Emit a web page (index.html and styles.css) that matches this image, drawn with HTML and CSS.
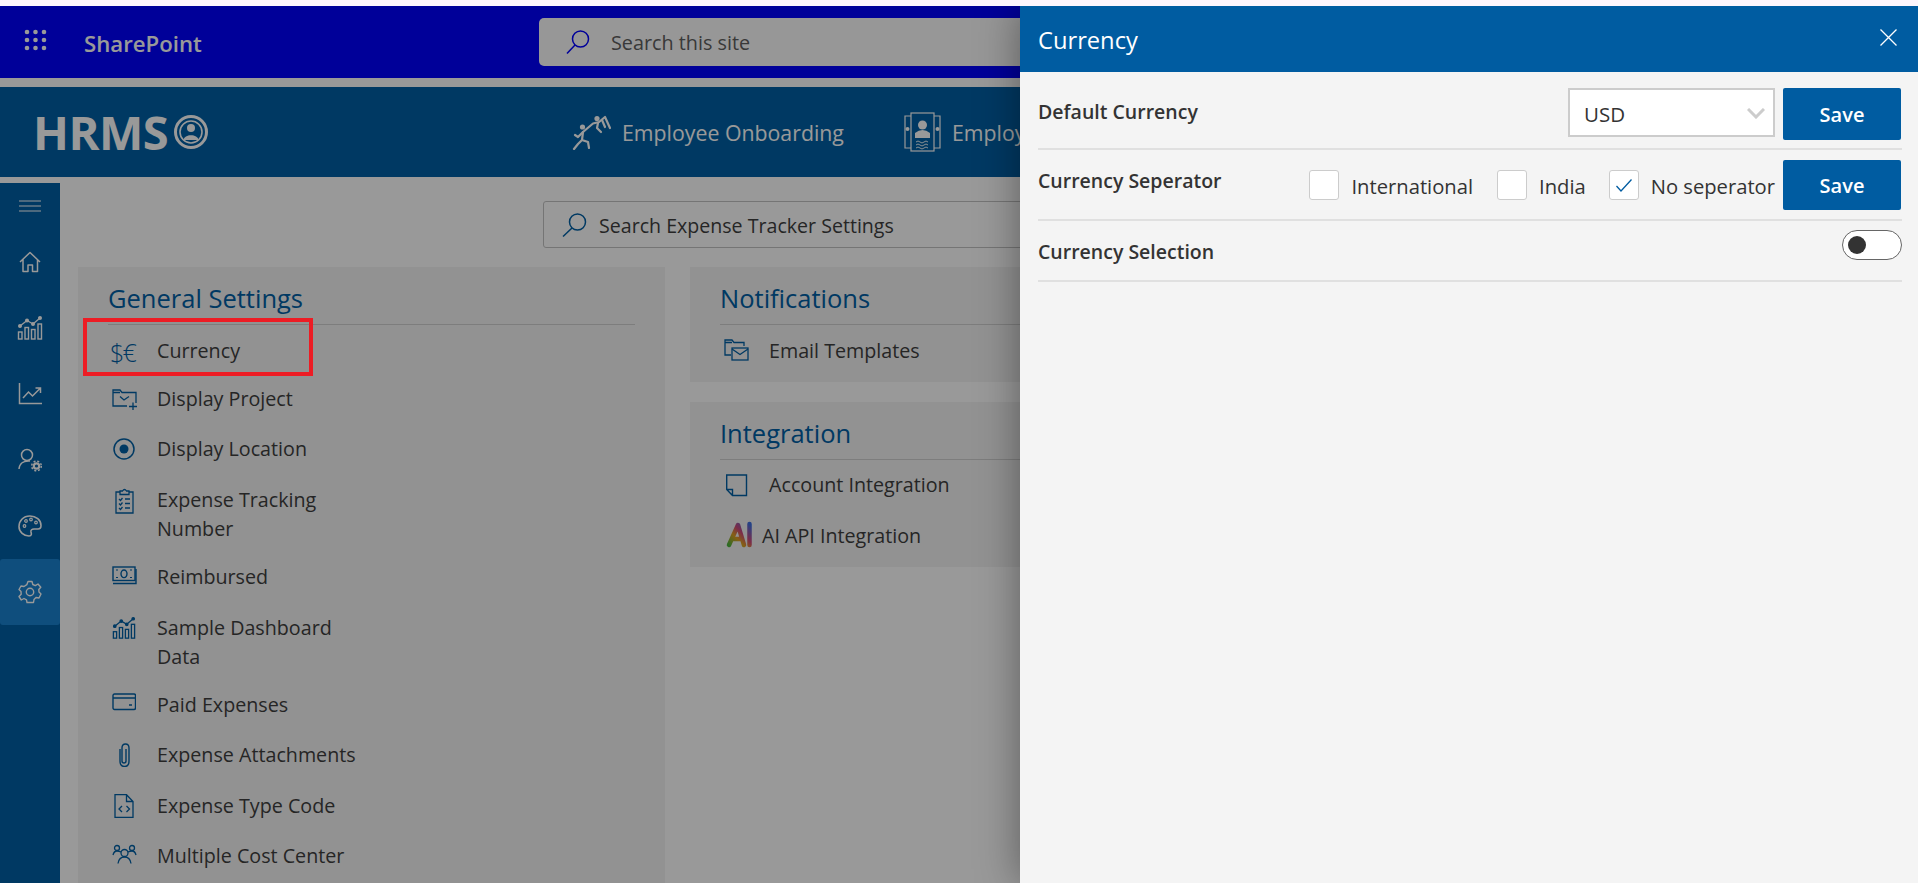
FILE: index.html
```html
<!DOCTYPE html>
<html lang="en">
<head>
    <meta charset="UTF-8">
    <meta name="viewport" content="width=device-width, initial-scale=1.0">
    <title>Expense Tracker Settings</title>
    <link rel="stylesheet" href="styles.css">
</head>
<body>
    <div class="shell">
        <header class="suite-bar">
            <svg class="waffle" width="23" height="22" viewBox="0 0 23 22" fill="#fff">
                <circle cx="3" cy="3" r="2.3"/><circle cx="11.5" cy="3" r="2.3"/><circle cx="20" cy="3" r="2.3"/>
                <circle cx="3" cy="11" r="2.3"/><circle cx="11.5" cy="11" r="2.3"/><circle cx="20" cy="11" r="2.3"/>
                <circle cx="3" cy="19" r="2.3"/><circle cx="11.5" cy="19" r="2.3"/><circle cx="20" cy="19" r="2.3"/>
            </svg>
            <span class="suite-name">SharePoint</span>
            <div class="suite-search">
                <svg width="24" height="24" viewBox="0 0 24 24" fill="none" stroke="#0000ff" stroke-width="1.5">
                    <circle cx="14.5" cy="9" r="8"/><path d="M9 15 L1 23.5"/>
                </svg>
                <span>Search this site</span>
            </div>
        </header>

        <div class="brand-bar">
            <div class="logo">
                <span>HRMS</span>
                <svg width="34" height="34" viewBox="0 0 34 34" fill="none" stroke="#fff">
                    <circle cx="17" cy="17" r="15.5" stroke-width="3"/>
                    <circle cx="17" cy="17" r="11" stroke-width="1.6"/>
                    <circle cx="17" cy="13" r="4" fill="#fff" stroke="none"/>
                    <path d="M9.5 25 C10 18.500 24 18.500 24.500 25 Z" fill="#fff" stroke="none"/>
                </svg>
            </div>
            <nav class="brand-nav">
                <a class="brand-link">
                    <svg width="39" height="35" viewBox="0 0 39 35" fill="none" stroke="#fff" stroke-width="2.200" stroke-linecap="round" stroke-linejoin="round">
                        <circle cx="10.500" cy="12" r="2.600" fill="#fff" stroke="none"/>
                        <circle cx="25" cy="3.500" r="2.600" fill="#fff" stroke="none"/>
                        <path d="M3 20 L6 22 L11 17 L21 8.500 L27 7 L33 2 L38 13"/>
                        <path d="M26 8 L25 13 L29 17 M30 5 L33 12"/>
                        <path d="M11 17 L10 25 L16 27 L17 33 M10 25 L6 29 L2 34"/>
                    </svg>
                    <span>Employee Onboarding</span>
                </a>
                <a class="brand-link">
                    <svg width="37" height="40" viewBox="0 0 37 40" fill="none" stroke="#fff" stroke-width="1.2">
                        <rect x="7" y="1" width="23" height="38"/>
                        <path d="M7 4 H1 V36 H7 M30 4 H36 V36 H30"/>
                        <circle cx="18.500" cy="13" r="4.500" fill="#fff" stroke="none"/>
                        <path d="M11 26 V21 Q18.500 15 26 21 V26 Z" fill="#fff" stroke="none"/>
                        <path d="M12 30 q2 -2 4 0 t4 0 t4 0 M12 33 q2 -2 4 0 t4 0 t4 0 M12 36 q2 -2 4 0 t4 0 t4 0" stroke-width="0.900"/>
                        <circle cx="3.500" cy="17" r="2" fill="#fff" stroke="none"/>
                        <circle cx="33.500" cy="17" r="2" fill="#fff" stroke="none"/>
                    </svg>
                    <span>Employee</span>
                </a>
            </nav>
        </div>

        <div class="workspace">
            <aside class="sidebar">
                <div class="side-item side-menu">
                    <svg width="22" height="12" viewBox="0 0 22 12" stroke="#fff" stroke-width="1"><path d="M0 1 H22 M0 6 H22 M0 11 H22"/></svg>
                </div>
                <div class="side-item">
                    <svg width="24" height="24" viewBox="0 0 24 24" fill="none" stroke="#fff" stroke-width="1.500" stroke-linejoin="round">
                        <path d="M2 12 L12 2.500 L22 12 M5 9.500 V21.500 H10 V15 H14.500 V21.500 H19.500 V9.500"/>
                    </svg>
                </div>
                <div class="side-item">
                    <svg width="26" height="24" viewBox="0 0 26 24" fill="none" stroke="#fff" stroke-width="1.400">
                        <rect x="1.500" y="16" width="3.500" height="7"/><rect x="8" y="11.500" width="3.500" height="11.500"/><rect x="14.500" y="13.500" width="3.500" height="9.500"/><rect x="21" y="8" width="3.500" height="15"/>
                        <path d="M3 10 L10 4.500 L16 8 L23 2"/>
                        <circle cx="3" cy="10" r="1.300" fill="#fff"/><circle cx="10" cy="4.500" r="1.300" fill="#fff"/><circle cx="16" cy="8" r="1.300" fill="#fff"/><circle cx="23" cy="2" r="1.300" fill="#fff"/>
                    </svg>
                </div>
                <div class="side-item">
                    <svg width="24" height="22" viewBox="0 0 24 22" fill="none" stroke="#fff" stroke-width="1.500">
                        <path d="M1.500 0 V20.500 H24 M5 15 L10.500 9 L14.500 13 L22.500 5 M17.500 5 H22.500 V10"/>
                    </svg>
                </div>
                <div class="side-item">
                    <svg width="24" height="24" viewBox="0 0 24 24" fill="none" stroke="#fff" stroke-width="1.500">
                        <circle cx="9" cy="7" r="5.500"/><path d="M1 21 C1.500 15 6 12.500 12 13"/>
                        <circle cx="18.500" cy="18" r="2.700" stroke-width="2.200"/>
                        <circle cx="18.500" cy="18" r="4.800" stroke-width="1.500" stroke-dasharray="2 1.800"/>
                    </svg>
                </div>
                <div class="side-item">
                    <svg width="24" height="24" viewBox="0 0 24 24" fill="none" stroke="#fff" stroke-width="1.600">
                        <path d="M12 2 C5 2 1 7 1 12.500 C1 18 6 22 11 22 C14 22 13.500 19.500 13 18 C12.500 16 14 15 16 15 H20 C22 15 23 13.500 23 11.500 C23 6 18 2 12 2 Z"/>
                        <circle cx="6.500" cy="12" r="1.300" stroke-width="1.200"/><circle cx="8" cy="7" r="1.300" stroke-width="1.200"/><circle cx="13" cy="5.500" r="1.300" stroke-width="1.200"/><circle cx="18" cy="8.500" r="1.300" stroke-width="1.200"/>
                    </svg>
                </div>
                <div class="side-item side-active">
                    <svg width="24" height="24" viewBox="0 0 24 24" fill="none" stroke="#fff" stroke-width="1.400" stroke-linejoin="round">
                        <circle cx="12" cy="12" r="3.700"/>
                        <path d="M10 1.500 H14 L14.800 4.500 L17.300 5.600 L20 4 L22.800 7.200 L20.800 9.500 L21 12 L23 14 L21 18 L18 17.500 L16 19.500 L15.500 22.500 H9 L8.500 19.800 L6 18.500 L3.300 20 L1 16.500 L3.200 14.200 L3 11.500 L1 9.500 L3 6 L6 6.500 L8.800 4.700 Z"/>
                    </svg>
                </div>
            </aside>

            <main class="content">
                <div class="settings-search">
                    <svg width="25" height="24" viewBox="0 0 25 24" fill="none" stroke="#0060a5" stroke-width="1.500">
                        <circle cx="15.500" cy="9" r="8"/><path d="M10 15 L1 23.500"/>
                    </svg>
                    <span>Search Expense Tracker Settings</span>
                </div>

                <div class="card-columns">
                    <section class="card card-general">
                        <h3 class="card-title">General Settings</h3>
                        <ul class="setting-list">
                            <li class="setting-row">
                                <span class="row-icon currency-glyph">$€</span>
                                <span class="row-text">Currency</span>
                            </li>
                            <li class="setting-row">
                                <span class="row-icon">
                                    <svg width="25" height="24" viewBox="0 0 25 24" fill="none" stroke="#0060a5" stroke-width="1.300">
                                        <path d="M15 19 H1 V3 H8 L10 5.500 H24 V16 M1 5.500 H8"/>
                                        <path d="M8 9.500 L12 13 L17 9.500 M21 15.500 V23 M17 19.500 H25"/>
                                    </svg>
                                </span>
                                <span class="row-text">Display Project</span>
                            </li>
                            <li class="setting-row">
                                <span class="row-icon">
                                    <svg width="24" height="24" viewBox="0 0 24 24" fill="none" stroke="#0060a5" stroke-width="1.500">
                                        <circle cx="12" cy="12" r="10"/><circle cx="12" cy="12" r="4.500" fill="#0060a5" stroke="none"/>
                                    </svg>
                                </span>
                                <span class="row-text">Display Location</span>
                            </li>
                            <li class="setting-row">
                                <span class="row-icon">
                                    <svg width="24" height="26" viewBox="0 0 24 26" fill="none" stroke="#0060a5" stroke-width="1.300">
                                        <path d="M8 4 H4 V25 H21 V4 H17 M8 6.500 V3 H10.500 Q12.500 0 14.500 3 H17 V6.500 Z"/>
                                        <path d="M7 11 L8.500 12.500 L10.500 10 M13 11 H18 M7 15.500 L8.500 17 L10.500 14.500 M13 15.500 H18 M7 20 L8.500 21.500 L10.500 19 M13 20 H18"/>
                                    </svg>
                                </span>
                                <span class="row-text">Expense Tracking Number</span>
                            </li>
                            <li class="setting-row">
                                <span class="row-icon">
                                    <svg width="25" height="20" viewBox="0 0 25 20" fill="none" stroke="#0060a5" stroke-width="1.400">
                                        <rect x="1" y="2" width="22" height="13.500"/>
                                        <path d="M1 18.500 H24 V4"/>
                                        <ellipse cx="12" cy="8.800" rx="3" ry="3.800"/>
                                        <path d="M4 5 H6 M4 12.500 H6 M18 5 H20 M18 12.500 H20" stroke-width="1.200"/>
                                    </svg>
                                </span>
                                <span class="row-text">Reimbursed</span>
                            </li>
                            <li class="setting-row">
                                <span class="row-icon">
                                    <svg width="24" height="24" viewBox="0 0 26 24" fill="none" stroke="#0060a5" stroke-width="1.400">
                                        <rect x="1.500" y="16" width="3.500" height="7"/><rect x="8" y="11.500" width="3.500" height="11.500"/><rect x="14.500" y="13.500" width="3.500" height="9.500"/><rect x="21" y="8" width="3.500" height="15"/>
                                        <path d="M3 10 L10 4.500 L16 8 L23 2"/>
                                        <circle cx="3" cy="10" r="1.300" fill="#0060a5"/><circle cx="10" cy="4.500" r="1.300" fill="#0060a5"/><circle cx="16" cy="8" r="1.300" fill="#0060a5"/><circle cx="23" cy="2" r="1.300" fill="#0060a5"/>
                                    </svg>
                                </span>
                                <span class="row-text">Sample Dashboard Data</span>
                            </li>
                            <li class="setting-row">
                                <span class="row-icon">
                                    <svg width="24" height="18" viewBox="0 0 24 18" fill="none" stroke="#0060a5" stroke-width="1.400">
                                        <rect x="1" y="1" width="22.500" height="15.500" rx="1.500"/>
                                        <path d="M1 5 H23.500 M17 12 H20" stroke-width="1.500"/>
                                    </svg>
                                </span>
                                <span class="row-text">Paid Expenses</span>
                            </li>
                            <li class="setting-row">
                                <span class="row-icon">
                                    <svg width="24" height="24" viewBox="0 0 24 24" fill="none" stroke="#0060a5" stroke-width="1.400">
                                        <path d="M14 6 V18 Q14 20 12 20 Q10 20 10 18 V5 Q10 1 13.500 1 Q17 1 17 5 V18 Q17 23.500 12.500 23.500 Q8 23.500 8 18 V6"/>
                                    </svg>
                                </span>
                                <span class="row-text">Expense Attachments</span>
                            </li>
                            <li class="setting-row">
                                <span class="row-icon">
                                    <svg width="24" height="24" viewBox="0 0 24 24" fill="none" stroke="#0060a5" stroke-width="1.300">
                                        <path d="M3 .7 H14.500 L21 7.500 V23.300 H3 Z M14.500 .7 V7.500 H21"/>
                                        <path d="M10 12 L7 15 L10 18 M14.500 12 L17.500 15 L14.500 18"/>
                                    </svg>
                                </span>
                                <span class="row-text">Expense Type Code</span>
                            </li>
                            <li class="setting-row">
                                <span class="row-icon">
                                    <svg width="25" height="20" viewBox="0 0 25 20" fill="none" stroke="#0060a5" stroke-width="1.300">
                                        <circle cx="5" cy="4" r="2.500"/><circle cx="20" cy="4" r="2.500"/><circle cx="12.500" cy="9" r="3.500"/>
                                        <path d="M1 11 Q2 7 5 7 Q7 7 9 8 M24 11 Q23 7 20 7 Q18 7 16 8 M6 19.500 Q7 13 12.500 13 Q18 13 19 19.500"/>
                                    </svg>
                                </span>
                                <span class="row-text">Multiple Cost Center</span>
                            </li>
                        </ul>
                    </section>

                    <div class="card-stack">
                        <section class="card">
                            <h3 class="card-title">Notifications</h3>
                            <ul class="setting-list">
                                <li class="setting-row">
                                    <span class="row-icon">
                                        <svg width="25" height="22" viewBox="0 0 25 22" fill="none" stroke="#0060a5" stroke-width="1.300">
                                            <path d="M7 16 H1 V1 H8 L10 3.500 H20 V7 M1 3.500 H8"/>
                                            <rect x="8" y="9" width="16" height="12"/><path d="M8 10 L16 15.500 L24 10"/>
                                        </svg>
                                    </span>
                                    <span class="row-text">Email Templates</span>
                                </li>
                            </ul>
                        </section>
                        <section class="card card-integration">
                            <h3 class="card-title">Integration</h3>
                            <ul class="setting-list">
                                <li class="setting-row">
                                    <span class="row-icon">
                                        <svg width="24" height="24" viewBox="0 0 24 24" fill="none" stroke="#0060a5" stroke-width="1.400">
                                            <path d="M2.700 2 H22.500 V22.500 H8.500 L2.700 16.500 Z M2.700 16.500 H8.500 V22.500"/>
                                        </svg>
                                    </span>
                                    <span class="row-text">Account Integration</span>
                                </li>
                                <li class="setting-row row-ai">
                                    <span class="row-icon">
                                        <svg width="27" height="27" viewBox="0 0 27 27" fill="none" stroke-width="4.500" stroke-linecap="round" stroke-linejoin="round">
                                            <defs>
                                                <linearGradient id="ai-grad" x1="0" y1="1" x2="1" y2="0">
                                                    <stop offset="0" stop-color="#4fb53f"/>
                                                    <stop offset="0.350" stop-color="#e0a020"/>
                                                    <stop offset="0.600" stop-color="#d04a7a"/>
                                                    <stop offset="1" stop-color="#3f6fe0"/>
                                                </linearGradient>
                                            </defs>
                                            <path d="M3 24 L12 4 L18 24 M7.500 18 H16 M23.500 3 V24" stroke="url(#ai-grad)"/>
                                        </svg>
                                    </span>
                                    <span class="row-text">AI API Integration</span>
                                </li>
                            </ul>
                        </section>
                    </div>
                </div>
            </main>
        </div>

        <div class="dim-overlay"></div>
        <div class="note-box"></div>

        <aside class="panel">
            <div class="panel-head">
                <span class="panel-title">Currency</span>
                <svg class="panel-close" width="17" height="17" viewBox="0 0 17 17" stroke="#fff" stroke-width="1.300"><path d="M.5 .5 L16.500 16.500 M16.500 .5 L.5 16.500"/></svg>
            </div>
            <div class="panel-body">
                <div class="panel-row row-default">
                    <span class="panel-label">Default Currency</span>
                    <div class="row-controls">
                        <div class="select-box">
                            <span>USD</span>
                            <svg width="18" height="11" viewBox="0 0 18 11" fill="none" stroke="#ccc" stroke-width="3"><path d="M1 1 L9 9 L17 1"/></svg>
                        </div>
                        <button class="save-btn">Save</button>
                    </div>
                </div>
                <div class="panel-row row-separator">
                    <span class="panel-label">Currency Seperator</span>
                    <div class="row-controls">
                        <span class="check-box"></span>
                        <span class="check-label label-intl">International</span>
                        <span class="check-box"></span>
                        <span class="check-label label-india">India</span>
                        <span class="check-box">
                            <svg width="16" height="13" viewBox="0 0 16 13" fill="none" stroke="#005ca1" stroke-width="1.300"><path d="M.5 7 L5 12 L15.500 .5"/></svg>
                        </span>
                        <span class="check-label label-none">No seperator</span>
                        <button class="save-btn">Save</button>
                    </div>
                </div>
                <div class="panel-row row-selection">
                    <span class="panel-label">Currency Selection</span>
                    <span class="toggle"><span class="toggle-knob"></span></span>
                </div>
            </div>
        </aside>
    </div>
</body>
</html>
```
FILE: styles.css
```css
* {
    box-sizing: border-box;
}
html, body {
    margin: 0;
    height: 100%;
    overflow: hidden;
}
body {
    font-family: "Open Sans", "Noto Sans", Arial, sans-serif;
    background-color: #fdf6fd;
    padding-top: 6px;
    color: #3f3f3f;
}
.shell {
    position: relative;
    height: 877px;
    overflow: hidden;
    background-color: #fff;
}

/* suite bar */
.suite-bar {
    height: 72px;
    background-color: #0000ff;
    display: flex;
    align-items: center;
    color: #fff;
}
.waffle {
    margin-left: 24px;
    margin-top: -5px;
}
.suite-name {
    margin-left: 37px;
    margin-top: 2px;
    font-size: 22.200px;
    font-weight: 600;
    width: 455px;
}
.suite-search {
    width: 892px;
    height: 48px;
    background-color: #fcfcfc;
    border-radius: 5px;
    display: flex;
    align-items: center;
    padding-left: 27px;
    gap: 21px;
    color: #5f5f5f;
    font-size: 19.800px;
}

/* brand bar */
.brand-bar {
    height: 90px;
    margin-top: 9px;
    background-color: #0060a5;
    display: flex;
    align-items: center;
    color: #fff;
}
.logo {
    display: flex;
    align-items: center;
    gap: 6px;
    margin-left: 33px;
    font-size: 47px;
    line-height: 1;
    font-weight: 700;
    letter-spacing: -0.500px;
    width: 539px;
}
.brand-nav {
    display: flex;
    gap: 60px;
}
.brand-link {
    display: flex;
    align-items: center;
    gap: 11px;
    font-size: 21.300px;
    white-space: nowrap;
}

/* sidebar */
.workspace {
    display: flex;
    margin-top: 6px;
    height: 700px;
}
.sidebar {
    width: 60px;
    flex: none;
    background-color: #0060a5;
}
.side-item {
    display: flex;
    align-items: center;
    justify-content: center;
    height: 66px;
}
.side-menu {
    height: 46px;
}
.side-active {
    background-color: #1a83d1;
    border-radius: 3px;
}

/* main content */
.content {
    flex: 1;
    padding: 18px 0 0 18px;
}
.settings-search {
    width: 892px;
    height: 47px;
    margin-left: 465px;
    border: 1px solid #c4c4c4;
    border-radius: 3px;
    display: flex;
    align-items: center;
    padding: 2px 0 0 18px;
    gap: 12px;
    font-size: 19.600px;
}
.settings-search svg {
    margin-top: -2px;
}
.card-columns {
    display: flex;
    gap: 25px;
    margin-top: 19px;
}
.card {
    background-color: #f3f3f3;
    padding: 14px 30px 14px;
    width: 587px;
}
.card-general {
    height: 700px;
}
.card-stack {
    display: flex;
    flex-direction: column;
    gap: 20px;
}
.card-title {
    margin: 0;
    padding-bottom: 9px;
    border-bottom: 1px solid #d0d0d0;
    font-size: 25.500px;
    line-height: 34px;
    font-weight: 400;
    color: #0060a5;
}
.setting-list {
    list-style: none;
    margin: 11px 0 0;
    padding: 0;
    display: flex;
    flex-direction: column;
    gap: 18.400px;
}
.setting-row {
    display: flex;
    min-height: 32px;
    font-size: 19.700px;
    line-height: 29.500px;
}
.card-general .setting-row:first-child {
    margin-bottom: -2.400px;
}
.row-icon {
    width: 49px;
    flex: none;
    padding: 3px 0 0 4px;
    line-height: 0;
}
.row-text {
    width: 215px;
}
.currency-glyph {
    font-size: 25px;
    line-height: 32px;
    font-weight: 300;
    letter-spacing: -1.800px;
    color: #0060a5;
    padding: 0 0 0 2px;
}
.card-integration .setting-list {
    margin-top: 10px;
    gap: 19px;
}
.row-ai .row-icon {
    width: 42px;
    padding: 0 0 0 6px;
}

/* dimmed page and annotation */
.dim-overlay {
    position: absolute;
    inset: 0;
    background-color: rgba(0, 0, 0, 0.4);
}
.note-box {
    position: absolute;
    left: 83px;
    top: 312px;
    width: 230px;
    height: 58px;
    border: 4px solid #ed1c24;
}

/* currency panel */
.panel {
    position: absolute;
    top: 0;
    right: 0;
    bottom: 0;
    width: 898px;
    background-color: #f4f4f4;
    box-shadow: 0 0 40px rgba(0, 0, 0, 0.4);
    color: #333;
}
.panel-head {
    height: 66px;
    background-color: #005ca1;
    color: #fff;
    display: flex;
    align-items: center;
    justify-content: space-between;
    padding: 0 21px 0 18px;
}
.panel-title {
    font-size: 23.700px;
    margin-top: 2px;
}
.panel-close {
    margin-top: -4px;
}
.panel-body {
    padding: 0 16px 0 18px;
}
.panel-row {
    display: flex;
    justify-content: space-between;
    border-bottom: 2px solid #e0e0e0;
}
.panel-label {
    font-size: 19.500px;
    font-weight: 600;
    line-height: 30px;
}
.row-controls {
    display: flex;
    align-items: flex-start;
    margin-right: 1px;
}
.row-default {
    height: 78px;
    padding-top: 16px;
}
.row-default .panel-label {
    margin-top: 9px;
}
.row-default .save-btn {
    height: 52px;
}
.row-separator {
    height: 71px;
    padding-top: 10px;
}
.row-separator .panel-label {
    margin-top: 6px;
}
.row-selection {
    height: 61px;
    padding-top: 9px;
}
.row-selection .panel-label {
    margin-top: 7px;
}
.select-box {
    width: 207px;
    height: 49px;
    background-color: #fff;
    border: 2px solid #ccc;
    display: flex;
    align-items: center;
    justify-content: space-between;
    padding: 2px 8px 0 14px;
    font-size: 20.500px;
    margin-right: 8px;
}
.save-btn {
    width: 118px;
    height: 50px;
    border: 0;
    border-radius: 2px;
    background-color: #005ca1;
    color: #fff;
    font-family: inherit;
    font-size: 20px;
    font-weight: 600;
    padding: 0;
}
.check-box {
    width: 30px;
    height: 30px;
    margin-top: 10px;
    background-color: #fff;
    border: 1px solid #ccc;
    border-radius: 3px;
    display: flex;
    align-items: center;
    justify-content: center;
}
.check-label {
    font-size: 20.200px;
    font-weight: 500;
    line-height: 30px;
    margin-top: 11px;
    margin-left: 12px;
    white-space: nowrap;
}
.label-intl {
    margin-right: 24px;
}
.label-india {
    margin-right: 23px;
}
.label-none {
    margin-right: 8px;
}
.toggle {
    width: 60px;
    height: 30px;
    border: 1px solid #666;
    border-radius: 15px;
    background-color: #fff;
    padding: 5px 0 0 5px;
}
.toggle-knob {
    display: block;
    width: 18px;
    height: 18px;
    border-radius: 50%;
    background-color: #333;
}
```
